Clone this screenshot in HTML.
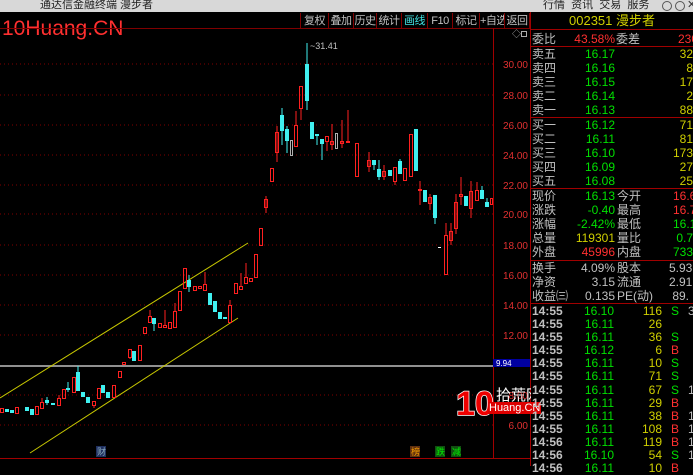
<!DOCTYPE html>
<html><head><meta charset="utf-8"><style>
*{margin:0;padding:0;box-sizing:border-box}
body{width:693px;height:466px;background:#000;overflow:hidden;position:relative;font-family:"Liberation Sans","Noto Sans CJK SC",sans-serif;font-size:12px}
.a{position:absolute;white-space:nowrap;line-height:14px}
.g{color:#c0c0c0}.gr{color:#00e000}.r{color:#ff3030}.y{color:#d0d000}
.rt{text-align:right}
.btn{position:absolute;top:13px;height:16px;border-right:1px solid #800000;color:#c0c0c0;font-size:11px;line-height:16px;text-align:center;white-space:nowrap;overflow:hidden;letter-spacing:-0.5px}
.hl{position:absolute;left:531px;width:162px;height:1px;background:#a00000}
.lb{font-size:12px}
</style></head><body>
<div class="a" style="left:0;top:0;width:693px;height:12px;background:#d8d8d8"></div>
<div class="a" style="left:40px;top:-2px;font-size:11px;color:#222">通达信金融终端 漫步者</div>
<div class="a" style="left:543px;top:-2px;font-size:11px;color:#222">行情 &nbsp;资讯 &nbsp;交易 &nbsp;服务</div>
<div class="a" style="left:662px;top:1px;width:10px;height:10px;border:1px solid #555;border-radius:50%"></div>
<div class="a" style="left:675px;top:1px;width:10px;height:10px;border:1px solid #555;border-radius:50%"></div>
<div class="a" style="left:687px;top:-2px;font-size:11px;color:#333">✕</div>

<div class="a r" style="left:2px;top:18px;font-size:21px;line-height:22px">10Huang.CN</div>
<div class="btn" style="left:300px;width:29px;border-left:1px solid #800000">复权</div>
<div class="btn" style="left:329px;width:25px">叠加</div>
<div class="btn" style="left:354px;width:23px">历史</div>
<div class="btn" style="left:377px;width:25px">统计</div>
<div class="btn" style="left:402px;width:26px;color:#40e0e0">画线</div>
<div class="btn" style="left:428px;width:25px">F10</div>
<div class="btn" style="left:453px;width:27px">标记</div>
<div class="btn" style="left:480px;width:25px">+自选</div>
<div class="btn" style="left:505px;width:25px">返回</div>

<svg class="a" style="left:0;top:0" width="531" height="466">
<line x1="0" y1="28.5" x2="531" y2="28.5" stroke="#800000"/>
<line x1="493.5" y1="28" x2="493.5" y2="458" stroke="#a00000"/>
<line x1="530.5" y1="12" x2="530.5" y2="466" stroke="#a00000"/>
<line x1="0" y1="458.5" x2="531" y2="458.5" stroke="#a00000"/>
<g stroke="#800000" stroke-dasharray="1,3">
<line x1="0" y1="64" x2="493" y2="64"/><line x1="0" y1="95" x2="493" y2="95"/><line x1="0" y1="125" x2="493" y2="125"/><line x1="0" y1="155" x2="493" y2="155"/><line x1="0" y1="185" x2="493" y2="185"/><line x1="0" y1="214" x2="493" y2="214"/><line x1="0" y1="245" x2="493" y2="245"/><line x1="0" y1="275" x2="493" y2="275"/><line x1="0" y1="305" x2="493" y2="305"/><line x1="0" y1="335" x2="493" y2="335"/><line x1="0" y1="395" x2="493" y2="395"/><line x1="0" y1="425" x2="493" y2="425"/>
</g>
<line x1="0" y1="366" x2="493" y2="366" stroke="#909090" stroke-width="2"/>
<rect x="493" y="359" width="37" height="8" fill="#0000a0"/>
<text x="496" y="366" fill="#fff" font-size="8" font-family="Liberation Sans">9.94</text>
<g fill="#e03030" font-size="10" font-family="Liberation Sans" text-anchor="end">
<text x="528" y="68">30.00</text><text x="528" y="99">28.00</text><text x="528" y="129">26.00</text><text x="528" y="159">24.00</text><text x="528" y="189">22.00</text><text x="528" y="218">20.00</text><text x="528" y="249">18.00</text><text x="528" y="279">16.00</text><text x="528" y="309">14.00</text><text x="528" y="339">12.00</text><text x="528" y="399">8.00</text><text x="528" y="429">6.00</text>
</g>
<text x="310" y="49" fill="#c0c0c0" font-size="9" font-family="Liberation Sans">~31.41</text>
<line x1="0" y1="398" x2="248" y2="243" stroke="#c8c800"/>
<line x1="30" y1="453" x2="238" y2="318" stroke="#c8c800"/>
<g stroke-width="1">
<g fill="none" stroke="#ff2020">
<rect x="0.5" y="408.5" width="3" height="4"/><rect x="15.5" y="407.5" width="3" height="6"/><rect x="35.5" y="406.5" width="3" height="8"/><rect x="40.5" y="402.5" width="3" height="6"/><rect x="57.5" y="398.5" width="3" height="7"/><rect x="62.5" y="389.5" width="3" height="9"/><rect x="72.5" y="377.5" width="3" height="15"/><rect x="92.5" y="401.5" width="3" height="4"/><rect x="97.5" y="388.5" width="3" height="10"/><rect x="112.5" y="385.5" width="3" height="12"/><rect x="118.5" y="371.5" width="3" height="6"/><rect x="122.5" y="362.5" width="3" height="2"/><rect x="128.5" y="349.5" width="3" height="8"/><rect x="138.5" y="345.5" width="3" height="15"/><rect x="143.5" y="327.5" width="3" height="6"/><rect x="148.5" y="316.5" width="3" height="6"/><rect x="158.5" y="323.5" width="3" height="4"/><rect x="163.5" y="325.5" width="3" height="2"/><rect x="168.5" y="322.5" width="3" height="6"/><rect x="173.5" y="311.5" width="3" height="16"/><rect x="178.5" y="291.5" width="3" height="19"/><rect x="183.5" y="268.5" width="3" height="20"/><rect x="193.5" y="286.5" width="3" height="4"/><rect x="198.5" y="286.5" width="3" height="2"/><rect x="203.5" y="284.5" width="3" height="6"/><rect x="228.5" y="305.5" width="3" height="17"/><rect x="234.5" y="283.5" width="3" height="10"/><rect x="239.5" y="286.5" width="3" height="3"/><rect x="244.5" y="277.5" width="3" height="6"/><rect x="249.5" y="278.5" width="3" height="3"/><rect x="254.5" y="254.5" width="3" height="23"/><rect x="259.5" y="228.5" width="3" height="17"/><rect x="264.5" y="199.5" width="3" height="8"/><rect x="270.5" y="168.5" width="3" height="13"/><rect x="275.5" y="132.5" width="3" height="20"/><rect x="294.5" y="125.5" width="3" height="21"/><rect x="299.5" y="86.5" width="3" height="22"/><rect x="325.5" y="136.5" width="3" height="5"/><rect x="330.5" y="141.5" width="3" height="3"/><rect x="340.5" y="141.5" width="3" height="2"/><rect x="346.5" y="141.5" width="3" height="1"/><rect x="355.5" y="143.5" width="3" height="33"/><rect x="367.5" y="160.5" width="3" height="6"/><rect x="382.5" y="171.5" width="3" height="5"/><rect x="393.5" y="167.5" width="3" height="14"/><rect x="403.5" y="168.5" width="3" height="12"/><rect x="409.5" y="134.5" width="3" height="42"/><rect x="418.5" y="189.5" width="3" height="1"/><rect x="428.5" y="197.5" width="3" height="6"/><rect x="444.5" y="235.5" width="3" height="39"/><rect x="449.5" y="231.5" width="3" height="9"/><rect x="454.5" y="202.5" width="3" height="26"/><rect x="459.5" y="194.5" width="3" height="2"/><rect x="469.5" y="191.5" width="3" height="17"/><rect x="475.5" y="190.5" width="3" height="10"/><rect x="490.5" y="198.5" width="2" height="6"/>
</g>
<g stroke="#ff2020">
<line x1="42" y1="398" x2="42" y2="402"/><line x1="59" y1="395" x2="59" y2="398"/><line x1="94" y1="405" x2="94" y2="408"/><line x1="130" y1="357" x2="130" y2="359"/><line x1="150" y1="310" x2="150" y2="316"/><line x1="165" y1="310" x2="165" y2="325"/><line x1="175" y1="303" x2="175" y2="311"/><line x1="205" y1="272" x2="205" y2="284"/><line x1="230" y1="300" x2="230" y2="305"/><line x1="241" y1="273" x2="241" y2="286"/><line x1="246" y1="263" x2="246" y2="277"/><line x1="266" y1="196" x2="266" y2="213"/><line x1="277" y1="126" x2="277" y2="162"/><line x1="296" y1="111" x2="296" y2="125"/><line x1="301" y1="108" x2="301" y2="120"/><line x1="327" y1="141" x2="327" y2="151"/><line x1="332" y1="124" x2="332" y2="150"/><line x1="342" y1="120" x2="342" y2="148"/><line x1="348" y1="110" x2="348" y2="142"/><line x1="369" y1="152" x2="369" y2="172"/><line x1="384" y1="165" x2="384" y2="180"/><line x1="395" y1="181" x2="395" y2="185"/><line x1="420" y1="181" x2="420" y2="205"/><line x1="430" y1="194" x2="430" y2="210"/><line x1="446" y1="223" x2="446" y2="235"/><line x1="451" y1="223" x2="451" y2="245"/><line x1="456" y1="194" x2="456" y2="234"/><line x1="461" y1="177" x2="461" y2="205"/><line x1="471" y1="181" x2="471" y2="218"/><line x1="477" y1="182" x2="477" y2="190"/>
</g>
<g fill="#40f0f0" stroke="#40f0f0">
<rect x="5.5" y="409.5" width="3" height="2"/><rect x="10.5" y="410.5" width="3" height="2"/><rect x="25.5" y="407.5" width="3" height="3"/><rect x="30.5" y="409.5" width="3" height="5"/><rect x="45.5" y="400.5" width="3" height="2"/><rect x="51.5" y="403.5" width="3" height="1"/><rect x="66.5" y="388.5" width="3" height="1"/><rect x="76.5" y="372.5" width="3" height="18"/><rect x="81.5" y="392.5" width="3" height="4"/><rect x="86.5" y="397.5" width="3" height="5"/><rect x="101.5" y="385.5" width="3" height="7"/><rect x="106.5" y="392.5" width="3" height="5"/><rect x="132.5" y="351.5" width="3" height="9"/><rect x="152.5" y="318.5" width="3" height="5"/><rect x="187.5" y="280.5" width="3" height="6"/><rect x="208.5" y="293.5" width="3" height="11"/><rect x="213.5" y="301.5" width="3" height="10"/><rect x="218.5" y="312.5" width="3" height="6"/><rect x="223.5" y="317.5" width="3" height="1"/><rect x="280.5" y="115.5" width="3" height="15"/><rect x="285.5" y="129.5" width="3" height="11"/><rect x="305.5" y="64.5" width="3" height="36"/><rect x="310.5" y="122.5" width="3" height="16"/><rect x="315.5" y="134.5" width="3" height="1"/><rect x="320.5" y="139.5" width="3" height="4"/><rect x="372.5" y="160.5" width="3" height="4"/><rect x="377.5" y="169.5" width="3" height="7"/><rect x="388.5" y="170.5" width="3" height="5"/><rect x="398.5" y="161.5" width="3" height="12"/><rect x="414.5" y="129.5" width="3" height="41"/><rect x="423.5" y="190.5" width="3" height="11"/><rect x="433.5" y="195.5" width="3" height="22"/><rect x="464.5" y="196.5" width="3" height="9"/><rect x="480.5" y="190.5" width="3" height="8"/><rect x="485.5" y="202.5" width="3" height="4"/>
<line x1="47" y1="397" x2="47" y2="405"/><line x1="68" y1="382" x2="68" y2="392"/><line x1="78" y1="366" x2="78" y2="372"/><line x1="154" y1="323" x2="154" y2="331"/><line x1="189" y1="275" x2="189" y2="292"/><line x1="282" y1="108" x2="282" y2="145"/><line x1="287" y1="126" x2="287" y2="153"/><line x1="307" y1="43" x2="307" y2="110"/><line x1="317" y1="134" x2="317" y2="145"/><line x1="322" y1="143" x2="322" y2="160"/><line x1="374" y1="164" x2="374" y2="170"/><line x1="379" y1="160" x2="379" y2="180"/><line x1="400" y1="159" x2="400" y2="161"/><line x1="435" y1="217" x2="435" y2="224"/><line x1="482" y1="186" x2="482" y2="190"/><line x1="487" y1="198" x2="487" y2="202"/>
</g>
<g fill="none" stroke="#b0b0b0"><rect x="290.5" y="140.5" width="2" height="15"/><rect x="335.5" y="133.5" width="2" height="15"/></g>
<rect x="438" y="247" width="3" height="1" fill="#fff"/>
</g>
<text x="512" y="37" fill="#aaa" font-size="9">◇</text><rect x="521.5" y="31.5" width="5" height="5" fill="none" stroke="#aaa"/>
<rect x="96" y="446" width="10" height="11" fill="#203060"/><text x="97" y="455" fill="#8ab" font-size="9" font-family="Noto Sans CJK SC">财</text>
<rect x="410" y="446" width="10" height="11" fill="#603010"/><text x="411" y="455" fill="#e90" font-size="9" font-family="Noto Sans CJK SC">榜</text>
<rect x="435" y="446" width="10" height="11" fill="#105010"/><text x="436" y="455" fill="#0e0" font-size="9" font-family="Noto Sans CJK SC">跌</text>
<rect x="451" y="446" width="10" height="11" fill="#105010"/><text x="452" y="455" fill="#0e0" font-size="9" font-family="Noto Sans CJK SC">减</text>
<text x="456" y="415" fill="#e00" stroke="#fff" stroke-width="1.5" paint-order="stroke" font-size="34" font-weight="bold" font-family="Liberation Sans">10</text>
<text x="496" y="400" fill="#fff" font-size="15" font-family="Noto Sans CJK SC">拾荒网</text>
</svg>
<div class="a" style="left:488px;top:402px;font-size:11px;color:#fff;background:#d00;padding:0 1px;line-height:12px">Huang.CN</div>

<div class="a y" style="left:569px;top:14px;font-size:13px">002351 漫步者</div>
<div class="hl" style="top:29px"></div>
<div class="a g lb" style="left:532px;top:32px">委比</div><div class="a r rt" style="left:560px;top:32px;width:55px">43.58%</div><div class="a g lb" style="left:616px;top:32px">委差</div><div class="a r" style="left:678px;top:32px">230</div>
<div class="hl" style="top:46px"></div>
<div class="hl" style="top:117px"></div><div class="hl" style="top:188px"></div><div class="hl" style="top:260px"></div><div class="hl" style="top:303px"></div>
<div class="a g lb" style="left:532px;top:47px">卖五<br>卖四<br>卖三<br>卖二<br>卖一</div>
<div class="a gr rt" style="left:560px;top:47px;width:55px">16.17<br>16.16<br>16.15<br>16.14<br>16.13</div>
<div class="a y rt" style="left:640px;top:47px;width:53px">32<br>8<br>17<br>2<br>88</div>
<div class="a g lb" style="left:532px;top:118px">买一<br>买二<br>买三<br>买四<br>买五</div>
<div class="a gr rt" style="left:560px;top:118px;width:55px">16.12<br>16.11<br>16.10<br>16.09<br>16.08</div>
<div class="a y rt" style="left:640px;top:118px;width:53px">71<br>81<br>173<br>27<br>25</div>
<div class="a g lb" style="left:532px;top:189px">现价<br>涨跌<br>涨幅<br>总量<br>外盘</div>
<div class="a rt" style="left:550px;top:189px;width:65px"><span class="gr">16.13</span><br><span class="gr">-0.40</span><br><span class="gr">-2.42%</span><br><span class="y">119301</span><br><span class="r">45996</span></div>
<div class="a g lb" style="left:617px;top:189px">今开<br>最高<br>最低<br>量比<br>内盘</div>
<div class="a" style="left:673px;top:189px"><span class="r">16.6</span><br><span class="r">16.7</span><br><span class="gr">16.1</span><br><span class="gr">&nbsp;0.7</span><br><span class="gr">7330</span></div>
<div class="a g lb" style="left:532px;top:261px">换手<br>净资<br>收益㈢</div>
<div class="a g rt" style="left:550px;top:261px;width:65px">4.09%<br>3.15<br>0.135</div>
<div class="a g lb" style="left:617px;top:261px">股本<br>流通<br>PE(动)</div>
<div class="a g" style="left:669px;top:261px">5.93<br>2.91<br>&nbsp;89.</div>
<div class="a g" style="left:532px;top:305px;line-height:13.1px;font-weight:bold">14:55<br>14:55<br>14:55<br>14:55<br>14:55<br>14:55<br>14:55<br>14:55<br>14:55<br>14:55<br>14:56<br>14:56<br>14:56</div>
<div class="a gr rt" style="left:570px;top:305px;width:44px;line-height:13.1px">16.10<br>16.11<br>16.11<br>16.12<br>16.11<br>16.11<br>16.11<br>16.11<br>16.11<br>16.11<br>16.11<br>16.10<br>16.11</div>
<div class="a y rt" style="left:630px;top:305px;width:32px;line-height:13.1px">116<br>26<br>36<br>6<br>10<br>71<br>67<br>29<br>38<br>108<br>119<br>54<br>10</div>
<div class="a" style="left:671px;top:305px;line-height:13.1px"><span class="gr">S</span><br>&nbsp;<br><span class="gr">S</span><br><span class="r">B</span><br><span class="gr">S</span><br><span class="gr">S</span><br><span class="gr">S</span><br><span class="r">B</span><br><span class="r">B</span><br><span class="r">B</span><br><span class="r">B</span><br><span class="gr">S</span><br><span class="r">B</span></div>
<div class="a g" style="left:688px;top:305px;line-height:13.1px">3<br><br><br><br><br><br>1<br><br>1<br>1<br>1<br>1</div>
</body></html>
